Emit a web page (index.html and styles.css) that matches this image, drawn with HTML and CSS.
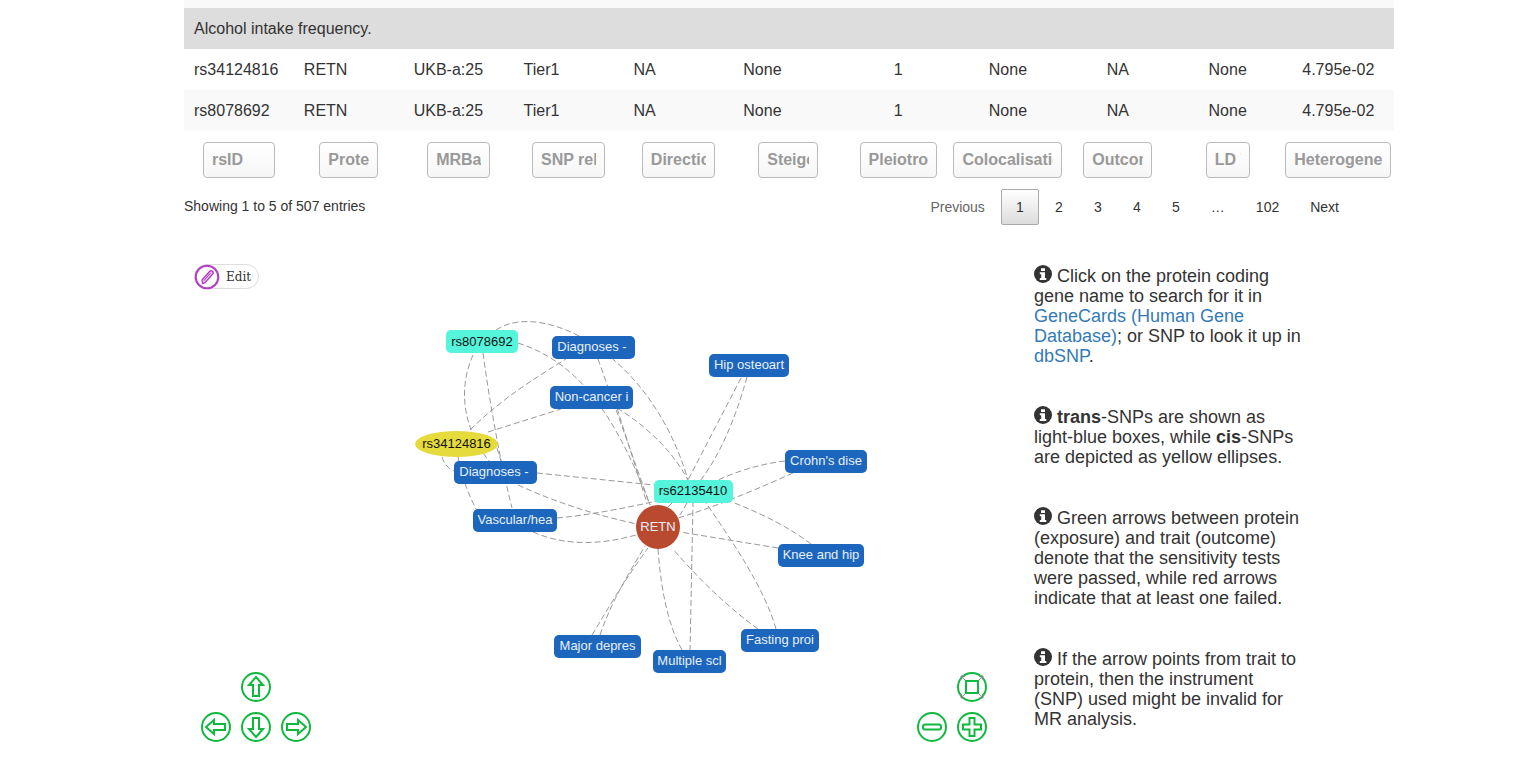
FILE: index.html
```html
<!DOCTYPE html>
<html lang="en">
<head>
    <meta charset="UTF-8">
    <meta name="viewport" content="width=device-width, initial-scale=1.0">
    <title>Protein MR results</title>
    <link rel="stylesheet" href="styles.css">
</head>
<body>
    <div class="container">
        <div class="stripe-top"></div>
        <table class="results">
            <tbody>
                <tr class="group"><td colspan="11">Alcohol intake frequency.</td></tr>
                <tr>
                    <td>rs34124816</td><td>RETN</td><td>UKB-a:25</td><td>Tier1</td><td>NA</td><td>None</td>
                    <td class="mid">1</td><td class="mid">None</td><td class="mid">NA</td><td class="mid">None</td><td class="mid">4.795e-02</td>
                </tr>
                <tr class="odd">
                    <td>rs8078692</td><td>RETN</td><td>UKB-a:25</td><td>Tier1</td><td>NA</td><td>None</td>
                    <td class="mid">1</td><td class="mid">None</td><td class="mid">NA</td><td class="mid">None</td><td class="mid">4.795e-02</td>
                </tr>
            </tbody>
            <tfoot>
                <tr>
                    <th><input class="f1" placeholder="rsID"></th>
                    <th><input class="f2" placeholder="Protein"></th>
                    <th><input class="f3" placeholder="MRBase ID"></th>
                    <th><input class="f4" placeholder="SNP relationship"></th>
                    <th><input class="f5" placeholder="Direction"></th>
                    <th><input class="f6" placeholder="Steiger"></th>
                    <th><input class="f7" placeholder="Pleiotropy"></th>
                    <th><input class="f8" placeholder="Colocalisation"></th>
                    <th><input class="f9" placeholder="Outcome"></th>
                    <th><input class="f10" placeholder="LD Value"></th>
                    <th><input class="f11" placeholder="Heterogeneity"></th>
                </tr>
            </tfoot>
        </table>

        <div class="table-bottom">
            <div class="info">Showing 1 to 5 of 507 entries</div>
            <div class="pager">
                <a class="page-btn muted">Previous</a>
                <a class="page-btn current">1</a>
                <a class="page-btn">2</a>
                <a class="page-btn">3</a>
                <a class="page-btn">4</a>
                <a class="page-btn">5</a>
                <span class="page-btn">…</span>
                <a class="page-btn">102</a>
                <a class="page-btn">Next</a>
            </div>
        </div>

        <div class="lower">
            <div class="graph">
                <a class="edit-btn">
                    <svg class="edit-icon" width="26" height="26" viewBox="0 0 26 26">
                        <circle cx="13" cy="13" r="11.3" fill="#fff" stroke="#b23cc4" stroke-width="2"/>
                        <path d="M8.5 19.5 L8 16 L15.5 7.5 Q17 6 18.5 7.3 Q20 8.8 18.5 10.3 L11 18.6 Z" fill="#e6c4ec" stroke="#b23cc4" stroke-width="1.3"/>
                        <path d="M10 16.5 L16.5 9" fill="none" stroke="#b23cc4" stroke-width="1"/>
                    </svg>
                    <span>Edit</span>
                </a>

                <svg class="network" width="830" height="530" viewBox="184 240 830 530">
                    <g class="edges">
                        <path d="M496 330 C540 300 650 350 688 480"/>
                        <path d="M473 355 C462 380 462 405 471 430"/>
                        <path d="M483 353 C490 405 500 460 512 508"/>
                        <path d="M470 430 C500 400 535 378 566 359"/>
                        <path d="M488 432 L561 409"/>
                        <path d="M518 343 C570 360 610 400 650 505"/>
                        <path d="M598 359 L650 505"/>
                        <path d="M617 408 C645 425 672 450 688 480"/>
                        <path d="M617 408 L646 500"/>
                        <path d="M537 473 L654 485"/>
                        <path d="M518 485 C555 502 595 515 637 524"/>
                        <path d="M557 518 C590 515 625 508 657 501"/>
                        <path d="M533 532 C565 546 600 545 636 535"/>
                        <path d="M458 457 C462 480 470 497 476 509"/>
                        <path d="M442 457 C444 464 448 468 454 471"/>
                        <path d="M483 453 L489 461"/>
                        <path d="M497 448 L501 461"/>
                        <path d="M741 378 L688 480"/>
                        <path d="M747 377 C735 420 720 455 700 481"/>
                        <path d="M785 461 C760 464 738 471 718 480"/>
                        <path d="M793 473 C755 490 715 507 678 518"/>
                        <path d="M811 544 C790 528 765 515 732 502"/>
                        <path d="M778 548 L680 532"/>
                        <path d="M758 629 C725 605 695 575 673 549"/>
                        <path d="M776 629 C765 590 735 545 706 503"/>
                        <path d="M690 651 L693 503"/>
                        <path d="M682 650 C668 625 661 590 658 549"/>
                        <path d="M600 635 C612 600 628 575 645 546"/>
                        <path d="M592 635 C610 605 628 575 648 548"/>
                        <path d="M672 503 L668 507"/>
                        <path d="M687 503 L680 515"/>
                    </g>
                    <g class="nodes">
                        <rect class="teal" x="446" y="330" width="72" height="23" rx="5"/>
                        <text class="dark" x="482" y="346">rs8078692</text>
                        <ellipse class="yellow" cx="456.500" cy="444" rx="41.500" ry="13"/>
                        <text class="dark" x="456.500" y="448">rs34124816</text>
                        <rect class="teal" x="654" y="480" width="79" height="23" rx="5"/>
                        <text class="dark" x="693" y="495">rs62135410</text>
                        <circle class="red" cx="658" cy="527" r="22"/>
                        <text class="light" x="658" y="531">RETN</text>

                        <rect class="blue" x="552" y="336" width="83" height="23" rx="5"/>
                        <text class="light" x="592" y="351">Diagnoses -</text>
                        <rect class="blue" x="550" y="386" width="83" height="23" rx="5"/>
                        <text class="light" x="591.500" y="401">Non-cancer i</text>
                        <rect class="blue" x="709" y="354" width="80" height="23" rx="5"/>
                        <text class="light" x="749" y="369">Hip osteoart</text>
                        <rect class="blue" x="454" y="461" width="83" height="23" rx="5"/>
                        <text class="light" x="494" y="476">Diagnoses -</text>
                        <rect class="blue" x="785" y="450" width="82" height="23" rx="5"/>
                        <text class="light" x="826" y="465">Crohn's dise</text>
                        <rect class="blue" x="473" y="509" width="84" height="23" rx="5"/>
                        <text class="light" x="515" y="524">Vascular/hea</text>
                        <rect class="blue" x="778" y="544" width="86" height="23" rx="5"/>
                        <text class="light" x="821" y="559">Knee and hip</text>
                        <rect class="blue" x="554" y="635" width="87" height="23" rx="5"/>
                        <text class="light" x="597.500" y="650">Major depres</text>
                        <rect class="blue" x="741" y="629" width="78" height="23" rx="5"/>
                        <text class="light" x="780" y="644">Fasting proi</text>
                        <rect class="blue" x="653" y="650" width="73" height="23" rx="5"/>
                        <text class="light" x="689.500" y="665">Multiple scl</text>
                    </g>
                    <g class="nav">
                        <circle cx="256" cy="687" r="14"/>
                        <path d="M256 677 L263 685 L259 685 L259 696 L253 696 L253 685 L249 685 Z"/>
                        <circle cx="216" cy="727" r="14"/>
                        <path d="M206 727 L214 720 L214 724 L225 724 L225 730 L214 730 L214 734 Z"/>
                        <circle cx="256" cy="727" r="14"/>
                        <path d="M256 737 L263 729 L259 729 L259 718 L253 718 L253 729 L249 729 Z"/>
                        <circle cx="296" cy="727" r="14"/>
                        <path d="M306 727 L298 720 L298 724 L287 724 L287 730 L298 730 L298 734 Z"/>
                        <circle cx="972" cy="687" r="14"/>
                        <rect x="966" y="681" width="12" height="12"/>
                        <circle cx="932" cy="727" r="14"/>
                        <rect x="923" y="724.500" width="18" height="5" rx="2"/>
                        <circle cx="972" cy="727" r="14"/>
                        <path d="M969.500 718 H974.500 V724.500 H981 V729.500 H974.500 V736 H969.500 V729.500 H963 V724.500 H969.500 Z"/>
                    </g>
                    <g class="nav-corners">
                        <path d="M961 680 L961 676 L965 676 M961 676 L965 680"/>
                        <path d="M983 680 L983 676 L979 676 M983 676 L979 680"/>
                        <path d="M961 694 L961 698 L965 698 M961 698 L965 694"/>
                        <path d="M983 694 L983 698 L979 698 M983 698 L979 694"/>
                    </g>
                </svg>
            </div>

            <div class="notes">
                <p>
                    <svg class="info-icon" viewBox="0 0 18 18"><circle cx="9" cy="9" r="9"/><path class="i-mark" d="M7 3.200h4v2.800h-4z M5.800 7.300h5.200v5.700h1.300v2h-6.500v-2h1.400v-3.700h-1.400z"/></svg>
                    Click on the protein coding gene name to search for it in
                    <a href="#">GeneCards (Human Gene Database)</a>; or SNP to look it up in
                    <a href="#">dbSNP</a>.
                </p>
                <p>
                    <svg class="info-icon" viewBox="0 0 18 18"><circle cx="9" cy="9" r="9"/><path class="i-mark" d="M7 3.200h4v2.800h-4z M5.800 7.300h5.200v5.700h1.300v2h-6.500v-2h1.400v-3.700h-1.400z"/></svg>
                    <b>trans</b>-SNPs are shown as light-blue boxes, while <b>cis</b>-SNPs are depicted as yellow ellipses.
                </p>
                <p>
                    <svg class="info-icon" viewBox="0 0 18 18"><circle cx="9" cy="9" r="9"/><path class="i-mark" d="M7 3.200h4v2.800h-4z M5.800 7.300h5.200v5.700h1.300v2h-6.500v-2h1.400v-3.700h-1.400z"/></svg>
                    Green arrows between protein (exposure) and trait (outcome) denote that the sensitivity tests were passed, while red arrows indicate that at least one failed.
                </p>
                <p>
                    <svg class="info-icon" viewBox="0 0 18 18"><circle cx="9" cy="9" r="9"/><path class="i-mark" d="M7 3.200h4v2.800h-4z M5.800 7.300h5.200v5.700h1.300v2h-6.500v-2h1.400v-3.700h-1.400z"/></svg>
                    If the arrow points from trait to protein, then the instrument (SNP) used might be invalid for MR analysis.
                </p>
            </div>
        </div>
    </div>
</body>
</html>
```

FILE: styles.css
```css
html, body {
    margin: 0;
    padding: 0;
    height: 783px;
    overflow: hidden;
    background-color: #fff;
}
body {
    font-family: "Liberation Sans", Arial, sans-serif;
    color: #333;
}
.container {
    width: 1210px;
    margin-left: 184px;
}
.stripe-top {
    height: 8px;
    background-color: #f9f9f9;
}

/* table */
.results {
    width: 1210px;
    table-layout: fixed;
    border-collapse: collapse;
    font-size: 16px;
    line-height: 21px;
}
.results td {
    padding: 10px;
    white-space: nowrap;
}
.results .group td {
    background-color: #ddd;
}
.results .odd td {
    background-color: #f9f9f9;
}
.results .mid {
    text-align: center;
}
.results th {
    padding: 11px 0 0;
    text-align: center;
    font-weight: normal;
}
.results tr > :nth-child(1) { width: 106px; }
.results tr > :nth-child(2) { width: 96px; }
.results tr > :nth-child(3) { width: 100px; }
.results tr > :nth-child(4) { width: 109px; }
.results tr > :nth-child(5) { width: 109px; }
.results tr > :nth-child(6) { width: 98px; }
.results tr > :nth-child(7) { width: 112px; }
.results tr > :nth-child(8) { width: 149px; }
.results tr > :nth-child(9) { width: 104px; }
.results tr > :nth-child(10) { width: 83px; }
.results tr > :nth-child(11) { width: 144px; }
.results td, .results th {
    box-sizing: border-box;
}
.results input {
    box-sizing: border-box;
    display: block;
    height: 36px;
    margin: 0 auto;
    padding: 0 8px;
    border: 1px solid #bbb;
    border-radius: 4px;
    background: linear-gradient(#fff, #f6f6f6);
    font-family: "Liberation Sans", Arial, sans-serif;
    font-size: 16px;
    font-weight: bold;
}
.results input::placeholder {
    color: #999;
    opacity: 1;
}
.f1 { width: 72px; }
.f2 { width: 59px; }
.f3 { width: 63px; }
.f4 { width: 73px; }
.f5 { width: 73px; }
.f6 { width: 60px; }
.f7 { width: 77px; }
.f8 { width: 109px; }
.f9 { width: 69px; }
.f10 { width: 44px; }
.f11 { width: 106px; }

/* info + pagination */
.table-bottom {
    display: flex;
    justify-content: space-between;
    padding-top: 11px;
    font-size: 14px;
    line-height: 20px;
    color: #333;
}
.info {
    padding-top: 7px;
}
.pager {
    display: flex;
    padding-right: 40px;
}
.page-btn {
    box-sizing: border-box;
    min-width: 38px;
    height: 36px;
    padding: 7px 14px;
    margin-left: 1px;
    border: 1px solid transparent;
    border-radius: 2px;
    text-align: center;
}
.page-btn.muted {
    color: #666;
}
.page-btn.current {
    border-color: #aaa;
    background: linear-gradient(#fff, #dcdcdc);
}

/* graph + notes */
.lower {
    display: flex;
    margin-top: 15px;
}
.graph {
    position: relative;
    width: 850px;
    height: 530px;
    flex-shrink: 0;
}
.network {
    position: absolute;
    left: 0;
    top: 0;
}
.edit-btn {
    position: absolute;
    z-index: 2;
    left: 10px;
    top: 24px;
    box-sizing: border-box;
    width: 65px;
    height: 25px;
    display: flex;
    align-items: center;
    gap: 6px;
    border: 1px solid #ddd;
    border-radius: 13px;
    font-family: "DejaVu Serif", serif;
    font-size: 12px;
    color: #333;
}
.edit-icon {
    margin-left: -1px;
}
.edges path {
    fill: none;
    stroke: #999;
    stroke-width: 1;
    stroke-dasharray: 6 3;
}
.nodes rect, .nodes ellipse, .nodes circle {
    stroke: none;
}
.nodes .blue { fill: #1c66bd; }
.nodes .teal { fill: #55f5dc; }
.nodes .yellow { fill: #e6db3c; }
.nodes .red { fill: #b94a2f; }
.nodes text {
    font-family: "Liberation Sans", Arial, sans-serif;
    font-size: 13px;
    text-anchor: middle;
}
.nodes .light { fill: #e8f0fa; }
.nodes .dark { fill: #111; }
.nav circle, .nav path, .nav rect {
    fill: none;
    stroke: #0fb83e;
    stroke-width: 2;
}
.nav-corners path {
    fill: none;
    stroke: #888;
    stroke-width: 1;
}
.notes {
    width: 270px;
    font-size: 18px;
    line-height: 20px;
    padding-top: 25px;
}
.notes p {
    margin: 0 0 40px;
}
.notes a {
    color: #337ab7;
    text-decoration: none;
}
.info-icon {
    width: 18px;
    height: 18px;
    vertical-align: -1px;
    fill: #333;
}
.info-icon .i-mark {
    fill: #fff;
}
```
